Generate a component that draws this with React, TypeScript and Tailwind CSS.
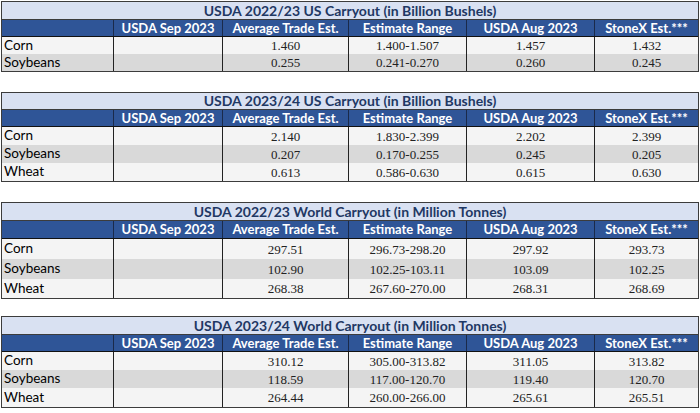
import React from "react";

type Row = { label: string; vals: string[] };
type T = {
  title: string;
  rows: Row[];
  top: string;
  titleH: string;
  headH: string;
  rowH: string[];
};

const tables: T[] = [
  {
    title: "USDA 2022/23 US Carryout (in Billion Bushels)",
    rows: [
      { label: "Corn", vals: ["1.460", "1.400-1.507", "1.457", "1.432"] },
      { label: "Soybeans", vals: ["0.255", "0.241-0.270", "0.260", "0.245"] },
    ],
    top: "mt-[1px]",
    titleH: "h-[18px]",
    headH: "h-[17px]",
    rowH: ["h-[17px]", "h-[17px]"],
  },
  {
    title: "USDA 2023/24 US Carryout (in Billion Bushels)",
    rows: [
      { label: "Corn", vals: ["2.140", "1.830-2.399", "2.202", "2.399"] },
      { label: "Soybeans", vals: ["0.207", "0.170-0.255", "0.245", "0.205"] },
      { label: "Wheat", vals: ["0.613", "0.586-0.630", "0.615", "0.630"] },
    ],
    top: "mt-[20px]",
    titleH: "h-[17px]",
    headH: "h-[17px]",
    rowH: ["h-[18px]", "h-[18px]", "h-[18px]"],
  },
  {
    title: "USDA 2022/23 World Carryout (in Million Tonnes)",
    rows: [
      { label: "Corn", vals: ["297.51", "296.73-298.20", "297.92", "293.73"] },
      { label: "Soybeans", vals: ["102.90", "102.25-103.11", "103.09", "102.25"] },
      { label: "Wheat", vals: ["268.38", "267.60-270.00", "268.31", "268.69"] },
    ],
    top: "mt-[20px]",
    titleH: "h-[18px]",
    headH: "h-[18px]",
    rowH: ["h-[20px]", "h-[20px]", "h-[19px]"],
  },
  {
    title: "USDA 2023/24 World Carryout (in Million Tonnes)",
    rows: [
      { label: "Corn", vals: ["310.12", "305.00-313.82", "311.05", "313.82"] },
      { label: "Soybeans", vals: ["118.59", "117.00-120.70", "119.40", "120.70"] },
      { label: "Wheat", vals: ["264.44", "260.00-266.00", "265.61", "265.51"] },
    ],
    top: "mt-[17px]",
    titleH: "h-[18px]",
    headH: "h-[17px]",
    rowH: ["h-[18px]", "h-[18px]", "h-[19px]"],
  },
];

const headers = [
  "",
  "USDA Sep 2023",
  "Average Trade Est.",
  "Estimate Range",
  "USDA Aug 2023",
  "StoneX Est.***",
];

const cols = "grid grid-cols-[111px_109px_126px_118px_128px_104px]";
const sans = "font-['Lato','Open_Sans',sans-serif]";
const serif = "font-['Liberation_Serif','Times_New_Roman',serif]";

function Table({ t }: { t: T }) {
  return (
    <div className={`${t.top} ml-[1px] w-[698px] border border-[#3c3c3c]`}>
      <div
        className={`${t.titleH} flex items-center justify-center bg-[#d9e1f2] text-[14px] font-bold text-[#1f3864] ${sans} leading-none border-b border-[#3c3c3c]`}
      >
        {t.title}
      </div>
      <div className={`${cols} ${t.headH} bg-[#2f5597] border-b border-[#111]`}>
        {headers.map((h, i) => (
          <div
            key={i}
            className={`flex items-center justify-center text-[13px] font-bold text-white ${sans} leading-none ${
              i > 0 ? "border-l border-[#1a2a4a]" : ""
            }`}
          >
            {h}
          </div>
        ))}
      </div>
      {t.rows.map((r, ri) => (
        <div
          key={ri}
          className={`${cols} ${t.rowH[ri]} ${ri % 2 === 1 ? "bg-[#d9d9d9]" : "bg-[#f4f4f4]"}`}
        >
          <div className={`flex items-center pl-[2px] text-[13.5px] text-black ${sans} leading-none`}>
            {r.label}
          </div>
          <div className="border-l border-[#222]" />
          {r.vals.map((v, vi) => (
            <div
              key={vi}
              className={`flex items-center justify-center border-l border-[#222] text-[13px] text-[#222] ${serif} leading-none`}
            >
              {v}
            </div>
          ))}
        </div>
      ))}
    </div>
  );
}

export default function App() {
  return (
    <div className="w-[700px] h-[413px] bg-white overflow-hidden flex flex-col">
      {tables.map((t, i) => (
        <Table key={i} t={t} />
      ))}
    </div>
  );
}
